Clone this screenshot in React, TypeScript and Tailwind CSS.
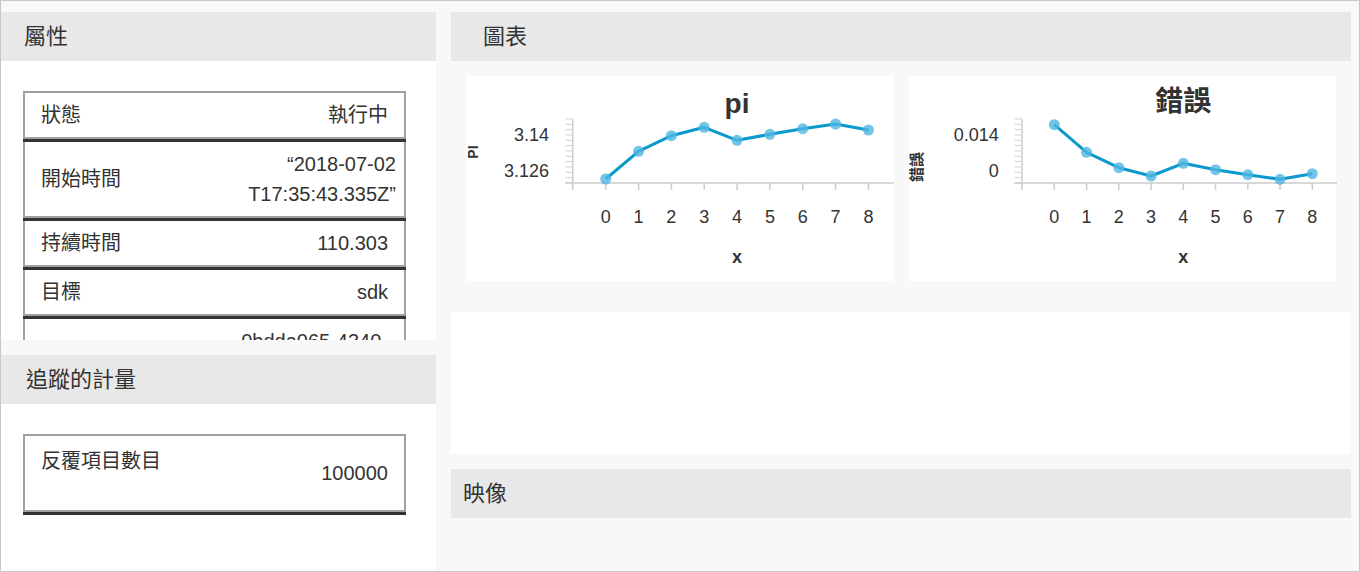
interface PropRow {
  label: string;
  value: string[];
}

interface ChartProps {
  title: string;
  titleY: number;
  yLabel: string;
  yLabelY: number;
  yLabelSize: number;
  axisX: number;
  labelRight: number;
  firstTick: number;
  step: number;
  ticks: { text: string; y: number }[];
  points: number[];
}

const FONT = "font-['Liberation_Sans','Noto_Sans_CJK_TC',sans-serif]";

const properties: PropRow[] = [
  { label: '狀態', value: ['執行中'] },
  { label: '開始時間', value: ['“2018-07-02', 'T17:35:43.335Z”'] },
  { label: '持續時間', value: ['110.303'] },
  { label: '目標', value: ['sdk'] },
  { label: '執行識別碼', value: ['0bdda065-4340-', '4a0a-9c3e-6f1d52b8'] },
];

function SectionHeader({ title, pad }: { title: string; pad: string }) {
  return (
    <div className={`h-[49px] shrink-0 bg-[#e8e8e8] flex items-center ${pad}`}>
      <span className="text-[22px] text-[#333]">{title}</span>
    </div>
  );
}

function Chart({
  title,
  titleY,
  yLabel,
  yLabelY,
  yLabelSize,
  axisX,
  labelRight,
  firstTick,
  step,
  ticks,
  points,
}: ChartProps) {
  const xs = points.map((_, i) => firstTick + step * i);
  const center = firstTick + step * 4;
  const minor = Array.from({ length: 13 }, (_, k) => 43 + k * 5.33);
  return (
    <div className="bg-white h-[205px]">
      <svg width="428" height="205" className="block" fontFamily="'Liberation Sans','Noto Sans CJK TC',sans-serif">
        <text x={center} y={titleY} textAnchor="middle" fontSize="28" fontWeight="bold" fill="#333">
          {title}
        </text>
        <text
          x={7}
          y={yLabelY}
          transform={`rotate(-90 7 ${yLabelY})`}
          textAnchor="middle"
          dominantBaseline="central"
          fontSize={yLabelSize}
          fontWeight="bold"
          fill="#333"
        >
          {yLabel}
        </text>

        {/* y axis */}
        <line x1={axisX} y1={43} x2={axisX} y2={107} stroke="#ccc" strokeWidth="1.5" />
        {minor.map((y) => (
          <line key={y} x1={axisX - 7.5} y1={y} x2={axisX} y2={y} stroke="#d4d4d4" strokeWidth="1" />
        ))}
        {ticks.map((t) => (
          <text key={t.text} x={labelRight} y={t.y} textAnchor="end" fontSize="18" fill="#333">
            {t.text}
          </text>
        ))}

        {/* x axis */}
        <line x1={axisX - 7.5} y1={107} x2={428} y2={107} stroke="#ccc" strokeWidth="1.5" />
        {[axisX, ...xs].map((x) => (
          <line key={x} x1={x} y1={107} x2={x} y2={114} stroke="#ccc" strokeWidth="1.5" />
        ))}
        {xs.map((x, i) => (
          <text key={i} x={x} y={147} textAnchor="middle" fontSize="18" fill="#333">
            {i}
          </text>
        ))}
        <text x={center} y={186.5} textAnchor="middle" fontSize="18" fontWeight="bold" fill="#333">
          x
        </text>

        {/* series */}
        <polyline
          points={points.map((y, i) => `${xs[i]},${y}`).join(' ')}
          fill="none"
          stroke="#0a98cd"
          strokeWidth="3"
          strokeLinejoin="round"
        />
        {points.map((y, i) => (
          <circle key={i} cx={xs[i]} cy={y} r="5.5" fill="#4fb7e0" fillOpacity="0.8" />
        ))}
      </svg>
    </div>
  );
}

export default function App() {
  return (
    <div className={`w-[1360px] h-[572px] border border-[#c8c8c8] bg-[#f8f8f8] flex overflow-hidden ${FONT} text-[#333]`}>
      {/* Left column */}
      <div className="w-[435px] shrink-0 flex flex-col pt-[11px]">
        <SectionHeader title="屬性" pad="pl-[23px]" />
        <div className="h-[279px] shrink-0 bg-white overflow-hidden pt-[30px] pl-[22px] pr-[30px]">
          {properties.map((row, i) => (
            <div key={row.label}>
              <div
                className={`flex items-center justify-between border-x-2 border-b-2 border-[#a0a0a0] px-[16px] py-[7px] text-[20px] leading-[30px] ${
                  i === 0 ? 'border-t-2' : ''
                } ${i === 1 ? 'pr-[8px]' : ''}`}
              >
                <span>{row.label}</span>
                <span className="text-right">
                  {row.value.map((v) => (
                    <span key={v} className="block">
                      {v}
                    </span>
                  ))}
                </span>
              </div>
              <div className="h-[3px] bg-[#333]" />
            </div>
          ))}
        </div>
        <div className="h-[15px] shrink-0" />
        <SectionHeader title="追蹤的計量" pad="pl-[25px]" />
        <div className="flex-1 bg-white pt-[30px] pl-[22px] pr-[30px]">
          <div className="flex justify-between border-2 border-[#a0a0a0] px-[16px] py-[10px] h-[78px] text-[20px] leading-[30px]">
            <span>反覆項目數目</span>
            <span className="self-center">100000</span>
          </div>
          <div className="h-[3px] bg-[#333]" />
        </div>
      </div>

      {/* Right column */}
      <div className="flex-1 flex flex-col pt-[11px] pl-[15px] pr-[8px]">
        <SectionHeader title="圖表" pad="pl-[32px]" />
        <div className="mt-[15px] grid grid-cols-2 gap-[15px] px-[15px]">
          <Chart
            title="pi"
            titleY={37}
            yLabel="PI"
            yLabelY={76}
            yLabelSize={14}
            axisX={106.7}
            labelRight={83}
            firstTick={139.7}
            step={32.84}
            ticks={[
              { text: '3.14', y: 65 },
              { text: '3.126', y: 101 },
            ]}
            points={[103, 75.3, 59.7, 51.3, 64.3, 58.3, 52.7, 48, 54]}
          />
          <Chart
            title="錯誤"
            titleY={35}
            yLabel="錯誤"
            yLabelY={91}
            yLabelSize={15}
            axisX={113}
            labelRight={89.7}
            firstTick={145.3}
            step={32.25}
            ticks={[
              { text: '0.014', y: 65 },
              { text: '0', y: 101 },
            ]}
            points={[48.7, 76.3, 91.7, 100, 87.3, 93.7, 98.7, 103.3, 97.7]}
          />
        </div>
        <div className="mt-[31px] h-[142px] bg-white" />
        <div className="mt-[15px]">
          <SectionHeader title="映像" pad="pl-[12px]" />
        </div>
      </div>
    </div>
  );
}
